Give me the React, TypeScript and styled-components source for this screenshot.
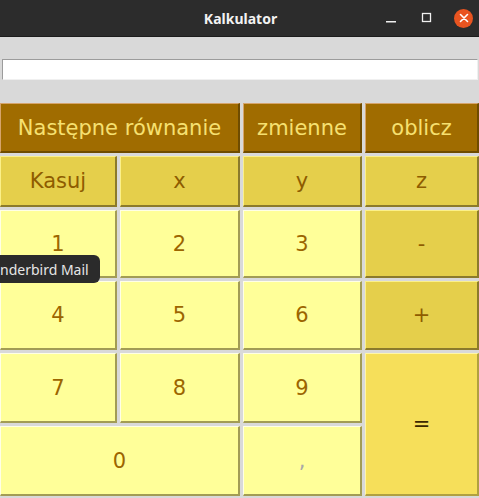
import React from "react";
import styled, { createGlobalStyle } from "styled-components";

const GlobalStyle = createGlobalStyle`
  html, body {
    margin: 0;
    padding: 0;
    background: #d9d9d9;
    overflow: hidden;
  }
  * { box-sizing: border-box; }
`;

const Window = styled.div`
  position: relative;
  width: 479px;
  height: 498px;
  background: #d9d9d9;
  overflow: hidden;
  font-family: "DejaVu Sans", "Liberation Sans", sans-serif;
`;

const TitleBar = styled.div`
  height: 37px;
  background: #2c2c2c;
  border-bottom: 1px solid #1c1c1c;
  display: flex;
  align-items: center;
  justify-content: center;
  position: relative;
`;

const Title = styled.div`
  color: #f2f2f2;
  font-family: "Noto Sans", "DejaVu Sans", sans-serif;
  font-weight: 700;
  font-size: 14px;
  margin-left: 2px;
`;

const Controls = styled.div`
  position: absolute;
  right: 6px;
  top: 0;
  height: 36px;
  display: flex;
  align-items: center;
  gap: 18px;
`;

const CtrlBox = styled.div`
  width: 18px;
  height: 18px;
  display: flex;
  align-items: center;
  justify-content: center;
`;

const CloseBtn = styled.div`
  width: 19px;
  height: 19px;
  border-radius: 50%;
  background: #e95420;
  display: flex;
  align-items: center;
  justify-content: center;
`;

const EntryRow = styled.div`
  padding: 22px 1px 23px 2px;
`;

const Entry = styled.div`
  height: 21px;
  background: #ffffff;
  border-top: 1px solid #9c9c9c;
  border-left: 1px solid #9c9c9c;
  border-right: 1px solid #f0f0f0;
  border-bottom: 1px solid #f0f0f0;
`;

const Pad = styled.div`
  display: grid;
  grid-template-columns: 117px 120px 119px 1fr;
  grid-template-rows: 50px 51px 68px 69px 70px 70px;
  column-gap: 3px;
  row-gap: 3px;
`;

type Tone = "head" | "func" | "digit" | "equals";

const tones: Record<Tone, { bg: string; fg: string; light: string; dark: string }> = {
  head: { bg: "#a06c00", fg: "#f6e070", light: "#d6a46c", dark: "#6f4c00" },
  func: { bg: "#e5cf4b", fg: "#8e5c00", light: "#fbf089", dark: "#8b7a2c" },
  digit: { bg: "#ffff99", fg: "#9c6500", light: "#ffffe6", dark: "#a29c55" },
  equals: { bg: "#f6df5a", fg: "#3c2800", light: "#fff6a8", dark: "#b0a040" },
};

const Key = styled.div<{ $tone: Tone; $col?: string; $row?: string; $muted?: boolean }>`
  grid-column: ${(p) => p.$col || "auto"};
  grid-row: ${(p) => p.$row || "auto"};
  background: ${(p) => tones[p.$tone].bg};
  color: ${(p) => (p.$muted ? "#a8a8a8" : tones[p.$tone].fg)};
  border-style: solid;
  border-width: 1px 2px 2px 1px;
  border-color: ${(p) => tones[p.$tone].light} ${(p) => tones[p.$tone].dark}
    ${(p) => tones[p.$tone].dark} ${(p) => tones[p.$tone].light};
  display: flex;
  align-items: center;
  justify-content: center;
  font-size: 21px;
  user-select: none;
`;

const Tooltip = styled.div`
  position: absolute;
  left: 0;
  top: 255px;
  width: 100px;
  height: 28px;
  background: #2b2b2b;
  border-radius: 0 6px 6px 0;
  color: #e6e6e6;
  font-family: "Noto Sans", "DejaVu Sans", sans-serif;
  font-size: 14px;
  display: flex;
  align-items: center;
  padding-left: 0;
  white-space: nowrap;
`;

export default function App() {
  return (
    <>
      <GlobalStyle />
      <Window>
        <TitleBar>
          <Title>Kalkulator</Title>
          <Controls>
            <CtrlBox>
              <svg width="12" height="12" viewBox="0 0 12 12">
                <rect x="1" y="9" width="10" height="1.5" fill="#f0f0f0" />
              </svg>
            </CtrlBox>
            <CtrlBox>
              <svg width="12" height="12" viewBox="0 0 12 12">
                <rect x="1.5" y="1.5" width="8" height="8" fill="none" stroke="#f0f0f0" strokeWidth="1.3" />
              </svg>
            </CtrlBox>
            <CloseBtn>
              <svg width="10" height="10" viewBox="0 0 10 10">
                <path d="M1.5 1.5 L8.5 8.5 M8.5 1.5 L1.5 8.5" stroke="#ffffff" strokeWidth="1.6" strokeLinecap="round" />
              </svg>
            </CloseBtn>
          </Controls>
        </TitleBar>
        <EntryRow>
          <Entry />
        </EntryRow>
        <Pad>
          <Key $tone="head" $col="1 / 3">Następne równanie</Key>
          <Key $tone="head">zmienne</Key>
          <Key $tone="head">oblicz</Key>

          <Key $tone="func">Kasuj</Key>
          <Key $tone="func">x</Key>
          <Key $tone="func">y</Key>
          <Key $tone="func">z</Key>

          <Key $tone="digit">1</Key>
          <Key $tone="digit">2</Key>
          <Key $tone="digit">3</Key>
          <Key $tone="func">-</Key>

          <Key $tone="digit">4</Key>
          <Key $tone="digit">5</Key>
          <Key $tone="digit">6</Key>
          <Key $tone="func">+</Key>

          <Key $tone="digit">7</Key>
          <Key $tone="digit">8</Key>
          <Key $tone="digit">9</Key>
          <Key $tone="equals" $col="4" $row="5 / 7">=</Key>

          <Key $tone="digit" $col="1 / 3">0</Key>
          <Key $tone="digit" $muted>,</Key>
        </Pad>
        <Tooltip>nderbird Mail</Tooltip>
      </Window>
    </>
  );
}
